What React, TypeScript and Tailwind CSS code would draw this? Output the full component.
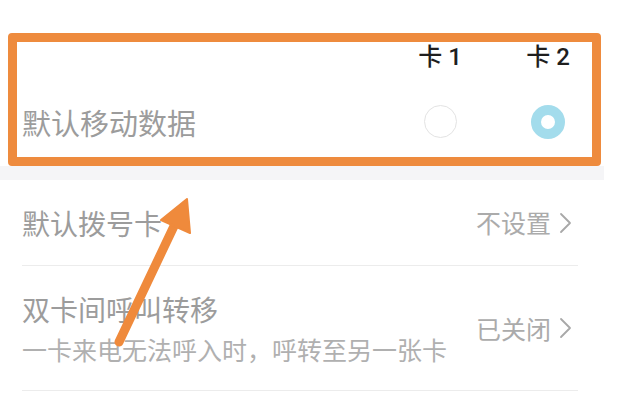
import React from "react";

const Chevron = () => (
  <svg width="16" height="24" viewBox="0 0 16 24" className="shrink-0">
    <path d="M3 3 L12 12 L3 21" fill="none" stroke="#a8a8a8" strokeWidth="1.8" strokeLinecap="round" strokeLinejoin="round" />
  </svg>
);

export default function App() {
  return (
    <div
      className="relative w-[624px] h-[409px] overflow-hidden bg-white"
      style={{ fontFamily: "'Noto Sans CJK SC', 'Noto Sans', sans-serif" }}
    >
      <div className="h-[33px]" />
      <div className="ml-[8px] w-[593px] h-[133px] border-[9px] border-[#ee8b3e] rounded-[4px] bg-white flex flex-col">
        <div className="h-[30px] flex items-center justify-end pr-[14px] gap-[48px]">
          <div
            className="w-[60px] text-center text-[24px] leading-none font-medium text-[#1e1e1e]"
            style={{ fontFamily: "Roboto, 'Noto Sans CJK SC', sans-serif" }}
          >
            卡 1
          </div>
          <div
            className="w-[60px] text-center text-[24px] leading-none font-medium text-[#1e1e1e]"
            style={{ fontFamily: "Roboto, 'Noto Sans CJK SC', sans-serif" }}
          >
            卡 2
          </div>
        </div>
        <div className="h-[85px] pt-[15px] flex items-center pl-[5px] pr-[14px]">
          <div className="flex-1 text-[29px] leading-none text-[#9c9c9c]">默认移动数据</div>
          <div className="flex gap-[48px]">
            <div className="w-[60px] flex justify-center">
              <div className="w-[33px] h-[33px] rounded-full border-[1.5px] border-[#e3e3e3]" />
            </div>
            <div className="w-[60px] flex justify-center">
              <div className="w-[34px] h-[34px] rounded-full border-[10px] border-[#a3dcec]" />
            </div>
          </div>
        </div>
      </div>
      <div className="h-[14px] w-[604px] bg-[#f5f5f7]" />
      <div className="mx-[22px] w-[556px]">
        <div className="h-[86px] flex items-center border-b border-[#ececec]">
          <div className="flex-1 text-[28px] leading-none text-[#9c9c9c]">默认拨号卡</div>
          <div className="flex items-center gap-[7px] pr-[4px]">
            <span className="text-[25px] leading-none text-[#ababab]">不设置</span>
            <Chevron />
          </div>
        </div>
        <div className="h-[125px] flex items-center border-b border-[#ececec]">
          <div className="flex-1 flex flex-col gap-[14px]">
            <div className="text-[28px] leading-none text-[#9c9c9c]">双卡间呼叫转移</div>
            <div className="text-[25px] leading-none text-[#b0b0b0]">一卡来电无法呼入时，呼转至另一张卡</div>
          </div>
          <div className="flex items-center gap-[7px] pr-[4px]">
            <span className="text-[25px] leading-none text-[#ababab]">已关闭</span>
            <Chevron />
          </div>
        </div>
      </div>
      <svg className="absolute left-0 top-0 pointer-events-none" width="624" height="409" viewBox="0 0 624 409">
        <line x1="119" y1="342" x2="175" y2="224" stroke="#ef8a3c" strokeWidth="9" strokeLinecap="round" />
        <polygon points="187,199 161,220 190,233" fill="#ef8a3c" stroke="#ef8a3c" strokeWidth="2" strokeLinejoin="round" />
      </svg>
    </div>
  );
}
